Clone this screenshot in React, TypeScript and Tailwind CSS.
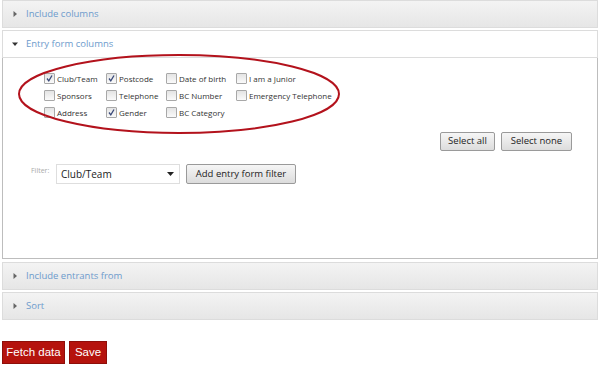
import React from 'react';

const columns = [
  [
    { label: 'Club/Team', checked: true },
    { label: 'Sponsors', checked: false },
    { label: 'Address', checked: false },
  ],
  [
    { label: 'Postcode', checked: true },
    { label: 'Telephone', checked: false },
    { label: 'Gender', checked: true },
  ],
  [
    { label: 'Date of birth', checked: false },
    { label: 'BC Number', checked: false },
    { label: 'BC Category', checked: false },
  ],
  [
    { label: 'I am a Junior', checked: false },
    { label: 'Emergency Telephone', checked: false },
  ],
];

const colWidths = ['w-[62px]', 'w-[60px]', 'w-[70px]', 'w-[100px]'];

const Arrow = ({ open }: { open?: boolean }) => (
  <svg width="6" height="6" viewBox="0 0 6 6" className="shrink-0">
    {open ? <path d="M0 1.5 L6 1.5 L3 5 Z" fill="#333" /> : <path d="M1.5 0 L5 3 L1.5 6 Z" fill="#666" />}
  </svg>
);

const Header = ({ title, open }: { title: string; open?: boolean }) => (
  <div
    className={`flex items-center gap-[8px] pl-[9px] h-[28px] border border-[#dcdcdc] ${
      open ? 'bg-white' : 'bg-gradient-to-b from-[#f3f3f3] to-[#e6e6e6]'
    }`}
  >
    <Arrow open={open} />
    <span className="text-[9.5px] text-[#6d9bcc]">{title}</span>
  </div>
);

const Checkbox = ({ checked }: { checked: boolean }) => (
  <span className="relative inline-flex w-[11px] h-[11px] shrink-0 border border-[#a8a8a8] bg-gradient-to-b from-[#e4e4e4] to-[#fafafa] rounded-[1px]">
    {checked && (
      <svg width="9" height="9" viewBox="0 0 9 9" className="absolute left-[0px] top-[0px]">
        <path d="M2 4.5 L3.8 6.8 L7 1.5" stroke="#3a4a7a" strokeWidth="1.3" fill="none" />
      </svg>
    )}
  </span>
);

const GreyButton = ({ children, className = '' }: { children: React.ReactNode; className?: string }) => (
  <button
    className={`h-[19px] text-[9.5px] text-[#222] border border-[#9a9a9a] rounded-[2px] bg-gradient-to-b from-[#f6f6f6] to-[#dcdcdc] ${className}`}
  >
    {children}
  </button>
);

export default function App() {
  return (
    <div className="w-[600px] h-[372px] bg-white font-['Open_Sans',sans-serif] overflow-hidden">
      <div className="px-[2px]">
        <Header title="Include columns" />
        <div className="mt-[2px]">
          <Header title="Entry form columns" open />
        </div>
        <div className="relative h-[201px] border-x border-b border-[#bdbdbd] border-t-0">
          <div className="flex pl-[41px] pt-[15px]">
            {columns.map((col, ci) => (
              <div key={ci} className={`flex flex-col gap-[6px] ${colWidths[ci]}`}>
                {col.map((item) => (
                  <label key={item.label} className="flex items-center gap-[2px] h-[11px] text-[8px] text-[#333] whitespace-nowrap">
                    <Checkbox checked={item.checked} />
                    {item.label}
                  </label>
                ))}
              </div>
            ))}
          </div>

          <div className="flex justify-end gap-[6px] pr-[25px] mt-[14px]">
            <GreyButton className="w-[55px]">Select all</GreyButton>
            <GreyButton className="w-[71px]">Select none</GreyButton>
          </div>

          <div className="flex items-center pl-[28px] mt-[13px]">
            <span className="text-[7px] text-[#aaa] self-start mt-[2px] w-[25px]">Filter:</span>
            <div className="flex items-center justify-between w-[124px] h-[20px] border border-[#dedede] pl-[4px] pr-[5px]">
              <span className="text-[10px] text-[#222]">Club/Team</span>
              <svg width="7" height="4" viewBox="0 0 7 4">
                <path d="M0 0 L7 0 L3.5 4 Z" fill="#222" />
              </svg>
            </div>
            <GreyButton className="ml-[6px] h-[20px] w-[110px]">Add entry form filter</GreyButton>
          </div>

          <svg
            width="336"
            height="86"
            viewBox="0 0 336 86"
            className="absolute left-[10px] top-[-6px] pointer-events-none"
          >
            <ellipse cx="166" cy="42" rx="160" ry="39" fill="none" stroke="#b3121c" strokeWidth="2" />
          </svg>
        </div>

        <div className="mt-[3px]">
          <Header title="Include entrants from" />
        </div>
        <div className="mt-[2px]">
          <Header title="Sort" />
        </div>
      </div>

      <div className="flex gap-[4px] pl-[2px] mt-[21px]">
        <button className="h-[23px] w-[63px] bg-[#b5130d] border border-[#8e0e09] text-white text-[11.5px] font-['Liberation_Sans',sans-serif]">
          Fetch data
        </button>
        <button className="h-[23px] w-[38px] bg-[#b5130d] border border-[#8e0e09] text-white text-[11.5px] font-['Liberation_Sans',sans-serif]">
          Save
        </button>
      </div>
    </div>
  );
}
